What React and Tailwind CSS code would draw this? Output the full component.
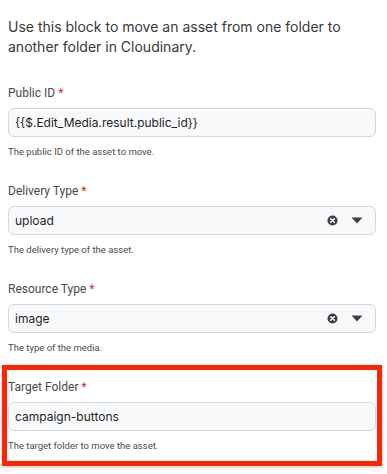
import React from "react";

function ClearIcon() {
  return (
    <svg width="11" height="11" viewBox="0 0 12 12" className="shrink-0">
      <circle cx="6" cy="6" r="5.5" fill="#3f3f46" />
      <path d="M4 4 L8 8 M8 4 L4 8" stroke="#fff" strokeWidth="1.6" strokeLinecap="round" />
    </svg>
  );
}

function Caret() {
  return (
    <svg width="12" height="7" viewBox="0 0 12 7" className="shrink-0">
      <path d="M0.5 0.5 H11.5 L6 6.5 Z" fill="#3f3f46" />
    </svg>
  );
}

const roboto = { fontFamily: "Roboto, 'Liberation Sans', sans-serif" };

function Field({ label, value, help, select, first }) {
  return (
    <div className={first ? "" : "mt-[24px]"}>
      <div className="text-[12px] leading-[16px] text-[#48484e]" style={roboto}>
        {label} <span className="text-[#dc2626]">*</span>
      </div>
      <div className="mt-[7px] flex items-center h-[29px] rounded-[6px] border border-[#d4d8e0] bg-[#f8f9fb] pl-[6px] pr-[12px] text-[12px] text-[#1f1f23]">
        <span className="flex-1 truncate">{value}</span>
        {select && (
          <div className="flex items-center gap-[13px]">
            <ClearIcon />
            <Caret />
          </div>
        )}
      </div>
      <div className="mt-[8px] text-[9.5px] leading-[14px] text-[#4a4a50]" style={roboto}>
        {help}
      </div>
    </div>
  );
}

export default function App() {
  return (
    <div
      className="w-[387px] h-[474px] bg-white pl-[8px] pr-[11px] pt-[17px] overflow-hidden"
      style={{ fontFamily: "Inter, 'Liberation Sans', sans-serif" }}
    >
      <p className="text-[14px] leading-[20px] text-[#38383d]">
        Use this block to move an asset from one folder to another folder in Cloudinary.
      </p>
      <div className="mt-[28px]">
        <Field
          first
          label="Public ID"
          value="{{$.Edit_Media.result.public_id}}"
          help="The public ID of the asset to move."
        />
        <Field label="Delivery Type" value="upload" help="The delivery type of the asset." select />
        <Field label="Resource Type" value="image" help="The type of the media." select />
        <div className="relative">
          <Field label="Target Folder" value="campaign-buttons" help="The target folder to move the asset." />
          <div className="pointer-events-none absolute left-[-6px] right-[-6px] top-[-14px] bottom-[-13px] border-[5px] border-[#ff2200] shadow-[0_1px_3px_rgba(0,0,0,0.25)]" />
        </div>
      </div>
    </div>
  );
}
